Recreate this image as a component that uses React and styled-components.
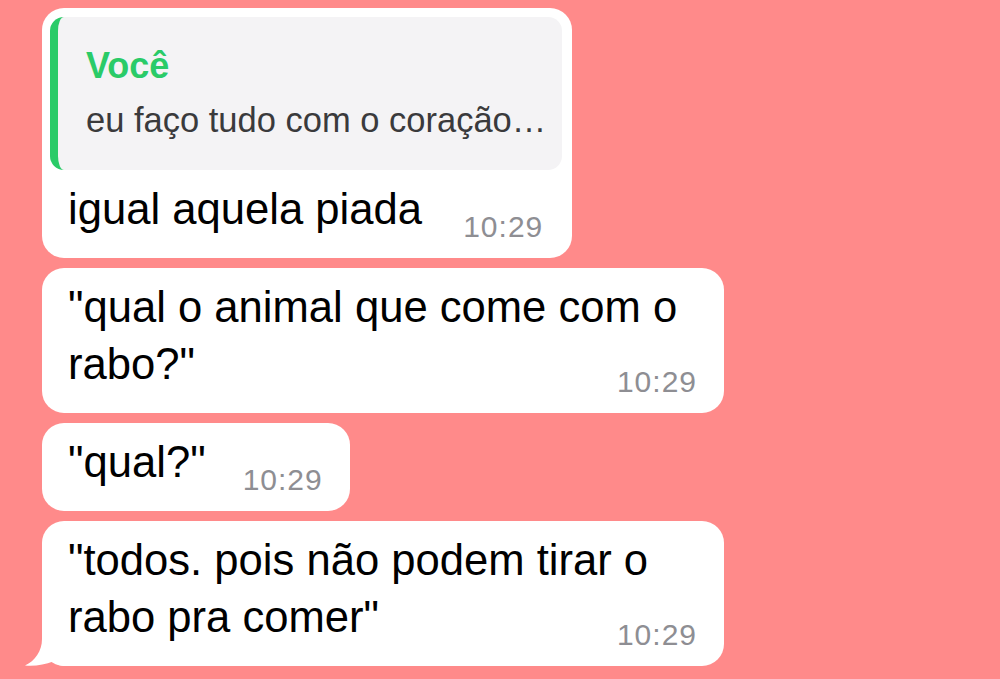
import styled, { createGlobalStyle } from "styled-components";

const GlobalStyle = createGlobalStyle`
  html, body {
    margin: 0;
    padding: 0;
    background: #ff8a8a;
  }
  body {
    font-family: "Liberation Sans", Arial, sans-serif;
    -webkit-font-smoothing: antialiased;
  }
`;

const Chat = styled.div`
  display: flex;
  flex-direction: column;
  align-items: flex-start;
  gap: 10px;
  padding: 8px 0 0 42px;
  min-height: 679px;
  box-sizing: border-box;
`;

const Bubble = styled.div`
  position: relative;
  background: #ffffff;
  border-radius: 22px;
  max-width: 682px;
  box-sizing: border-box;
  padding: ${(props) => (props.$quoted ? "9px 10px 0 8px" : "0")};
`;

const Quote = styled.div`
  display: flex;
  flex-direction: column;
  gap: 10px;
  background: #f4f3f5;
  border-left: 8px solid #2acb68;
  border-radius: 14px;
  padding: 27px 16px 28px 28px;
`;

const QuoteName = styled.div`
  color: #2acb68;
  font-weight: bold;
  font-size: 36px;
  line-height: 44px;
`;

const QuoteText = styled.div`
  color: #3a3a3c;
  font-size: 34.5px;
  line-height: 44px;
  white-space: nowrap;
`;

const Body = styled.div`
  display: flex;
  flex-wrap: wrap;
  align-items: flex-end;
  column-gap: 37px;
  padding: ${(props) => (props.$quoted ? "11px 19px 20px 18px" : "11px 27px 20px 26px")};
`;

const Text = styled.div`
  color: #000000;
  font-size: 43.6px;
  line-height: 57px;
`;

const Time = styled.span`
  margin-left: auto;
  margin-top: -23px;
  color: #8e8e93;
  font-size: 30px;
  line-height: 23px;
  letter-spacing: 1px;
  white-space: nowrap;
`;

const Tail = styled.svg`
  position: absolute;
  left: -17px;
  bottom: 0;
  width: 40px;
  height: 40px;
`;

const messages = [
  {
    id: 1,
    quote: { name: "Você", text: "eu faço tudo com o coração…" },
    text: "igual aquela piada",
    time: "10:29",
  },
  { id: 2, text: "\"qual o animal que come com o rabo?\"", time: "10:29" },
  { id: 3, text: "\"qual?\"", time: "10:29" },
  { id: 4, text: "\"todos. pois não podem tirar o rabo pra comer\"", time: "10:29", tail: true },
];

const Message = ({ msg }) => {
  const quoted = !!msg.quote;
  return (
    <Bubble $quoted={quoted}>
      {quoted && (
        <Quote>
          <QuoteName>{msg.quote.name}</QuoteName>
          <QuoteText>{msg.quote.text}</QuoteText>
        </Quote>
      )}
      <Body $quoted={quoted}>
        <Text>{msg.text}</Text>
        <Time>{msg.time}</Time>
      </Body>
      {msg.tail && (
        <Tail viewBox="0 0 40 40">
          <path
            d="M17 0 L17 13 C17 25 10 35 0 39.5 C10 40.5 20 38.5 28 35.5 C32 38.5 36 40 40 40 L40 0 Z"
            fill="#ffffff"
          />
        </Tail>
      )}
    </Bubble>
  );
};

const App = () => {
  return (
    <>
      <GlobalStyle />
      <Chat>
        {messages.map((m) => (
          <Message key={m.id} msg={m} />
        ))}
      </Chat>
    </>
  );
};

export default App;
